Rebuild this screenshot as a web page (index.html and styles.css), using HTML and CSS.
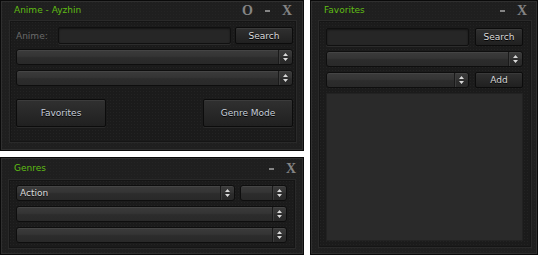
FILE: index.html
```html
<!DOCTYPE html>
<html>
<head>
<meta charset="utf-8">
<link rel="stylesheet" href="styles.css">
</head>
<body>
<div class="desk">
  <div class="left-col">
    <section class="win win-main">
      <header class="titlebar">
        <span class="title">Anime - Ayzhin</span>
        <div class="controls controls-main">
          <span class="ctl ctl-o">O</span>
          <span class="ctl ctl-min"></span>
          <span class="ctl ctl-x">X</span>
        </div>
      </header>
      <div class="panel panel-main">
        <div class="row row-search">
          <label class="lbl">Anime:</label>
          <div class="input"></div>
          <button class="btn btn-search">Search</button>
        </div>
        <div class="select sel-row"><span class="sel-text"></span><span class="sel-arrow"><svg width="5" height="8" viewBox="0 0 5 8"><path d="M2.5 0L5 3H0z M0 5H5L2.5 8z" fill="#d8d8d8"/></svg></span></div>
        <div class="select sel-row"><span class="sel-text"></span><span class="sel-arrow"><svg width="5" height="8" viewBox="0 0 5 8"><path d="M2.5 0L5 3H0z M0 5H5L2.5 8z" fill="#d8d8d8"/></svg></span></div>
        <div class="row row-big">
          <button class="btn btn-big">Favorites</button>
          <button class="btn btn-big">Genre Mode</button>
        </div>
      </div>
    </section>
    <section class="win win-genres">
      <header class="titlebar">
        <span class="title">Genres</span>
        <div class="controls controls-genres">
          <span class="ctl ctl-min"></span>
          <span class="ctl ctl-x">X</span>
        </div>
      </header>
      <div class="panel panel-genres">
        <div class="row row-genre">
          <div class="select sel-genre"><span class="sel-text">Action</span><span class="sel-arrow"><svg width="5" height="8" viewBox="0 0 5 8"><path d="M2.5 0L5 3H0z M0 5H5L2.5 8z" fill="#d8d8d8"/></svg></span></div>
          <div class="select sel-small"><span class="sel-text"></span><span class="sel-arrow"><svg width="5" height="8" viewBox="0 0 5 8"><path d="M2.5 0L5 3H0z M0 5H5L2.5 8z" fill="#d8d8d8"/></svg></span></div>
        </div>
        <div class="select sel-row2"><span class="sel-text"></span><span class="sel-arrow"><svg width="5" height="8" viewBox="0 0 5 8"><path d="M2.5 0L5 3H0z M0 5H5L2.5 8z" fill="#d8d8d8"/></svg></span></div>
        <div class="select sel-row2"><span class="sel-text"></span><span class="sel-arrow"><svg width="5" height="8" viewBox="0 0 5 8"><path d="M2.5 0L5 3H0z M0 5H5L2.5 8z" fill="#d8d8d8"/></svg></span></div>
      </div>
    </section>
  </div>
  <section class="win win-fav">
    <header class="titlebar">
      <span class="title">Favorites</span>
      <div class="controls controls-fav">
        <span class="ctl ctl-min"></span>
        <span class="ctl ctl-x">X</span>
      </div>
    </header>
    <div class="panel panel-fav">
      <div class="row row-fav1">
        <div class="input"></div>
        <button class="btn btn-side">Search</button>
      </div>
      <div class="select sel-fav"><span class="sel-text"></span><span class="sel-arrow"><svg width="5" height="8" viewBox="0 0 5 8"><path d="M2.5 0L5 3H0z M0 5H5L2.5 8z" fill="#d8d8d8"/></svg></span></div>
      <div class="row row-fav3">
        <div class="select sel-grow"><span class="sel-text"></span><span class="sel-arrow"><svg width="5" height="8" viewBox="0 0 5 8"><path d="M2.5 0L5 3H0z M0 5H5L2.5 8z" fill="#d8d8d8"/></svg></span></div>
        <button class="btn btn-side">Add</button>
      </div>
      <div class="list"></div>
    </div>
  </section>
</div>
</body>
</html>
```
FILE: styles.css
```css
* { box-sizing: border-box; }
html, body { margin: 0; padding: 0; background: #ffffff; }
body {
  font-family: "DejaVu Sans", Verdana, sans-serif;
  font-size: 9px;
  width: 540px;
  height: 256px;
  overflow: hidden;
}
.desk {
  display: grid;
  grid-template-columns: 304px 228px;
  column-gap: 6px;
  height: 255px;
}
.left-col {
  display: flex;
  flex-direction: column;
  gap: 6px;
}
.win {
  display: flex;
  flex-direction: column;
  background-color: #1f1f1f;
  background-image: radial-gradient(circle, #242424 0.7px, transparent 0.9px);
  background-size: 3px 3px;
  border: 1px solid #0a0a0a;
  box-shadow: inset 0 0 0 1px #2f2f2f;
}
.win-main { height: 151px; }
.win-genres { height: 98px; }
.win-fav { height: 255px; }

.titlebar {
  height: 19px;
  flex: none;
  display: flex;
  align-items: center;
  justify-content: space-between;
  padding-left: 13px;
}
.win-genres .titlebar { height: 21px; }
.title {
  color: #5fbd14;
  font-size: 9px;
  line-height: 1;
}
.controls {
  display: flex;
  align-items: center;
  color: #848484;
}
.controls-main { margin-right: 11px; }
.controls-genres { margin-right: 7px; }
.controls-fav { margin-right: 10px; }
.ctl {
  font-family: "Liberation Serif", "Times New Roman", serif;
  font-weight: bold;
  font-size: 14px;
  line-height: 1;
}
.ctl-o { margin-right: 12px; }
.ctl-min {
  width: 5px;
  height: 2px;
  background: #848484;
  margin-right: 12px;
}

.panel {
  flex: 1;
  display: flex;
  flex-direction: column;
  background-color: #1b1b1b;
  background-image: radial-gradient(circle, #232323 0.7px, transparent 0.9px);
  background-size: 3px 3px;
  border: 1px solid #292929;
  box-shadow: inset 0 0 0 1px #151515;
}
.panel-main {
  margin: 0 6px 7px 8px;
  padding: 6px 3px 6px 6px;
}
.panel-genres {
  margin: 0 7px 5px 7px;
  padding: 5px 8px 5px 7px;
}
.panel-fav {
  margin: 0 5px 6px 7px;
  padding: 7px 8px 6px 7px;
}

.row { display: flex; align-items: center; }
.row-search { height: 17px; gap: 4px; }
.lbl {
  color: #6a6a6a;
  width: 34px;
  margin-right: 4px;
}
.input {
  flex: 1;
  align-self: stretch;
  background: #262626;
  border: 1px solid #101010;
  border-radius: 2px;
  box-shadow: inset 0 1px 2px #141414, 0 1px 0 #2c2c2c;
}
.btn {
  font-family: "DejaVu Sans", Verdana, sans-serif;
  font-size: 9px;
  color: #dadada;
  background: linear-gradient(#303030, #202020);
  border: 1px solid #0c0c0c;
  border-radius: 2px;
  box-shadow: inset 0 1px 0 #3a3a3a;
  padding: 0;
  text-shadow: 0 1px 0 #000;
}
.btn-search { width: 58px; height: 17px; }
.row-big {
  justify-content: space-between;
  margin-top: 13px;
}
.btn-big {
  width: 90px;
  height: 28px;
  color: #c8d0dc;
  box-shadow: inset 0 1px 0 #3c3c3c, 0 1px 0 #2a2a2a;
}

.select {
  display: flex;
  height: 16px;
  border: 1px solid #0e0e0e;
  border-radius: 3px;
  background: linear-gradient(#3b3b3b 0%, #343434 45%, #2c2c2c 55%, #292929 100%);
  box-shadow: inset 0 1px 0 #454545;
  overflow: hidden;
}
.sel-text {
  flex: 1;
  color: #dcdcdc;
  font-size: 9px;
  line-height: 14px;
  padding-left: 3px;
  text-shadow: 0 1px 0 #111;
}
.sel-arrow {
  width: 14px;
  display: flex;
  align-items: center;
  justify-content: center;
  border-left: 1px solid #1a1a1a;
  box-shadow: inset 1px 0 0 #3c3c3c;
}
.sel-row { margin-top: 5px; }

.row-genre { gap: 5px; }
.sel-genre { flex: 1; }
.sel-small { width: 47px; }
.sel-row2 { margin-top: 5px; }

.row-fav1 { height: 18px; gap: 6px; }
.btn-side { width: 48px; height: 100%; }
.row-fav3 { height: 16px; gap: 6px; margin-top: 5px; }
.sel-grow { flex: 1; }
.sel-fav { margin-top: 5px; }
.list {
  flex: 1;
  margin-top: 5px;
  background: #2a2a2a;
  border: 1px solid #222;
}
```
